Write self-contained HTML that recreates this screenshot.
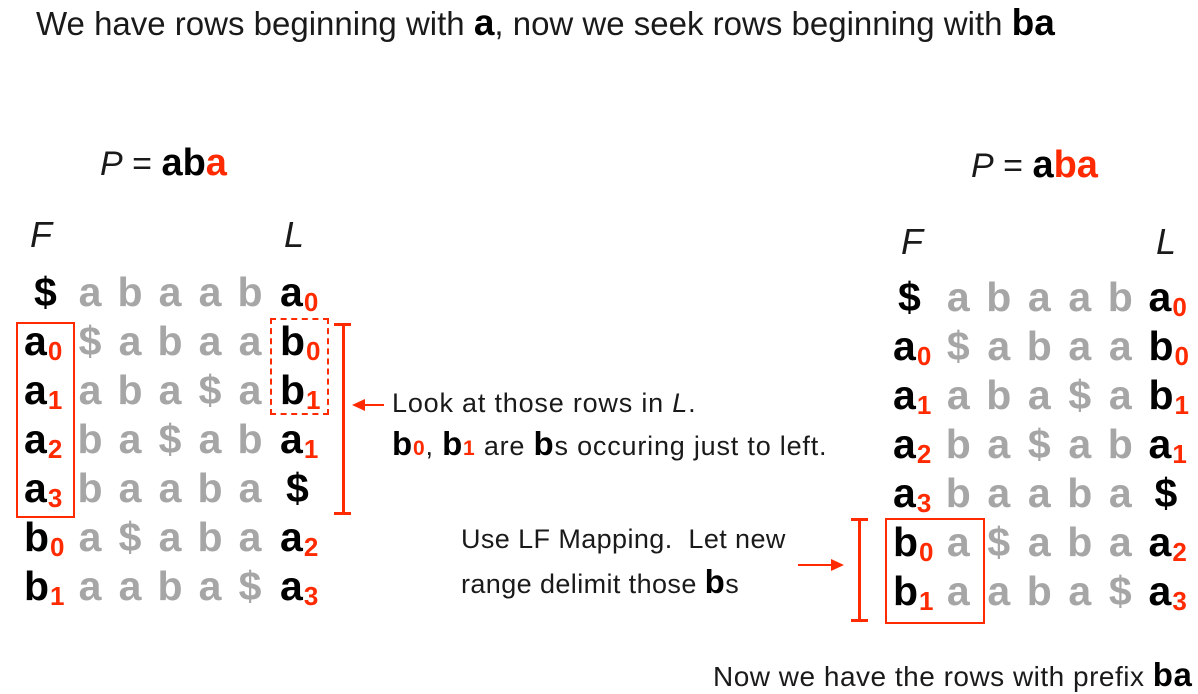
<!DOCTYPE html>
<html><head><meta charset="utf-8"><style>
body{margin:0;width:1198px;height:694px;background:#fff;position:relative;overflow:hidden;font-family:"Liberation Sans",sans-serif;color:#1a1a1a}
.a{position:absolute;white-space:nowrap}
.row{position:absolute;height:49px;line-height:49px;font-size:41px;font-weight:bold;display:flex;white-space:nowrap}
.row span{display:inline-block}
.f{color:#000}
.g{color:#a6a6a6;text-align:center}
.s{color:#ff2a00;font-size:26px;font-weight:bold;position:relative;top:5px;margin-left:1px}
.r{color:#ff2a00}
.it{font-style:italic}
.L .c0{width:54px;padding-left:8px;box-sizing:border-box}
.L .g{width:40px}
.L .cl{padding-left:10px}
.R .c0{width:53px;padding-left:8px;box-sizing:border-box}
.R .g{width:40.5px}
.R .cl{padding-left:8px}
.ln{position:absolute;background:#ff2a00}
.t{font-size:27px;letter-spacing:0.8px}
</style></head><body>
<div class="a" style="left:36px;top:2px;font-size:33px">We have rows beginning with <b style="color:#000;font-size:37px">a</b>, now we seek rows beginning with <b style="color:#000;font-size:37px">ba</b></div>

<div class="a" style="left:100px;top:142px;font-size:34px"><span class="it">P</span> = <b style="color:#000;font-size:38px">ab<span class="r">a</span></b></div>
<div class="a" style="left:971px;top:144px;font-size:34px"><span class="it">P</span> = <b style="color:#000;font-size:38px">a<span class="r">ba</span></b></div>

<div class="a it" style="left:30px;top:214px;font-size:36px">F</div>
<div class="a it" style="left:284px;top:214px;font-size:36px">L</div>
<div class="a it" style="left:901px;top:221px;font-size:36px">F</div>
<div class="a it" style="left:1156px;top:221px;font-size:36px">L</div>

<!-- Left grid -->
<div class="row L" style="left:16px;top:268px"><span class="c0 f" style="padding-left:18px">$</span><span class="g">a</span><span class="g">b</span><span class="g">a</span><span class="g">a</span><span class="g">b</span><span class="cl f">a<span class="s">0</span></span></div>
<div class="row L" style="left:16px;top:317px"><span class="c0 f">a<span class="s">0</span></span><span class="g">$</span><span class="g">a</span><span class="g">b</span><span class="g">a</span><span class="g">a</span><span class="cl f">b<span class="s">0</span></span></div>
<div class="row L" style="left:16px;top:366px"><span class="c0 f">a<span class="s">1</span></span><span class="g">a</span><span class="g">b</span><span class="g">a</span><span class="g">$</span><span class="g">a</span><span class="cl f">b<span class="s">1</span></span></div>
<div class="row L" style="left:16px;top:415px"><span class="c0 f">a<span class="s">2</span></span><span class="g">b</span><span class="g">a</span><span class="g">$</span><span class="g">a</span><span class="g">b</span><span class="cl f">a<span class="s">1</span></span></div>
<div class="row L" style="left:16px;top:464px"><span class="c0 f">a<span class="s">3</span></span><span class="g">b</span><span class="g">a</span><span class="g">a</span><span class="g">b</span><span class="g">a</span><span class="cl f" style="padding-left:16px">$</span></div>
<div class="row L" style="left:16px;top:513px"><span class="c0 f">b<span class="s">0</span></span><span class="g">a</span><span class="g">$</span><span class="g">a</span><span class="g">b</span><span class="g">a</span><span class="cl f">a<span class="s">2</span></span></div>
<div class="row L" style="left:16px;top:562px"><span class="c0 f">b<span class="s">1</span></span><span class="g">a</span><span class="g">a</span><span class="g">b</span><span class="g">a</span><span class="g">$</span><span class="cl f">a<span class="s">3</span></span></div>

<!-- Right grid -->
<div class="row R" style="left:885px;top:273px"><span class="c0 f" style="padding-left:13px">$</span><span class="g">a</span><span class="g">b</span><span class="g">a</span><span class="g">a</span><span class="g">b</span><span class="cl f">a<span class="s">0</span></span></div>
<div class="row R" style="left:885px;top:322px"><span class="c0 f">a<span class="s">0</span></span><span class="g">$</span><span class="g">a</span><span class="g">b</span><span class="g">a</span><span class="g">a</span><span class="cl f">b<span class="s">0</span></span></div>
<div class="row R" style="left:885px;top:371px"><span class="c0 f">a<span class="s">1</span></span><span class="g">a</span><span class="g">b</span><span class="g">a</span><span class="g">$</span><span class="g">a</span><span class="cl f">b<span class="s">1</span></span></div>
<div class="row R" style="left:885px;top:420px"><span class="c0 f">a<span class="s">2</span></span><span class="g">b</span><span class="g">a</span><span class="g">$</span><span class="g">a</span><span class="g">b</span><span class="cl f">a<span class="s">1</span></span></div>
<div class="row R" style="left:885px;top:469px"><span class="c0 f">a<span class="s">3</span></span><span class="g">b</span><span class="g">a</span><span class="g">a</span><span class="g">b</span><span class="g">a</span><span class="cl f" style="padding-left:14px">$</span></div>
<div class="row R" style="left:885px;top:518px"><span class="c0 f">b<span class="s">0</span></span><span class="g">a</span><span class="g">$</span><span class="g">a</span><span class="g">b</span><span class="g">a</span><span class="cl f">a<span class="s">2</span></span></div>
<div class="row R" style="left:885px;top:567px"><span class="c0 f">b<span class="s">1</span></span><span class="g">a</span><span class="g">a</span><span class="g">b</span><span class="g">a</span><span class="g">$</span><span class="cl f">a<span class="s">3</span></span></div>

<!-- Boxes -->
<div class="a" style="left:16px;top:322px;width:55px;height:192px;border:2px solid #ff2a00"></div>
<div class="a" style="left:270px;top:318px;width:55px;height:93px;border:2px dashed #ff2a00"></div>
<div class="a" style="left:885px;top:518px;width:96px;height:102px;border:2px solid #ff2a00"></div>

<!-- Left bracket -->
<div class="ln" style="left:342px;top:324px;width:3px;height:190px"></div>
<div class="ln" style="left:334px;top:323px;width:17px;height:3px"></div>
<div class="ln" style="left:334px;top:512px;width:17px;height:3px"></div>
<div class="ln" style="left:362px;top:404px;width:22px;height:2px"></div>
<svg class="a" style="left:352px;top:398px" width="14" height="14"><path d="M0 7 L13 1 L13 13 Z" fill="#ff2a00"/></svg>

<!-- Right bracket -->
<div class="ln" style="left:858px;top:519px;width:3px;height:102px"></div>
<div class="ln" style="left:851px;top:518px;width:17px;height:3px"></div>
<div class="ln" style="left:851px;top:619px;width:17px;height:3px"></div>
<div class="ln" style="left:798px;top:564px;width:36px;height:2px"></div>
<svg class="a" style="left:830px;top:558px" width="14" height="14"><path d="M14 7 L1 1 L1 13 Z" fill="#ff2a00"/></svg>

<div class="a t" style="left:392px;top:388px">Look at those rows in <i>L</i>.</div>
<div class="a t" style="left:392px;top:425px"><b style="color:#000;font-size:33px">b</b><b class="r" style="font-size:21px">0</b>, <b style="color:#000;font-size:33px">b</b><b class="r" style="font-size:21px">1</b> are <b style="color:#000;font-size:33px">b</b>s occuring just to left.</div>
<div class="a t" style="left:461px;top:524px;letter-spacing:0.4px">Use LF Mapping.&nbsp; Let new</div>
<div class="a t" style="left:461px;top:563px;letter-spacing:0.4px">range delimit those <b style="color:#000;font-size:33px">b</b>s</div>
<div class="a" style="left:713px;top:656px;font-size:28px;letter-spacing:0.5px">Now we have the rows with prefix <b style="color:#000;font-size:33px">ba</b></div>
</body></html>
